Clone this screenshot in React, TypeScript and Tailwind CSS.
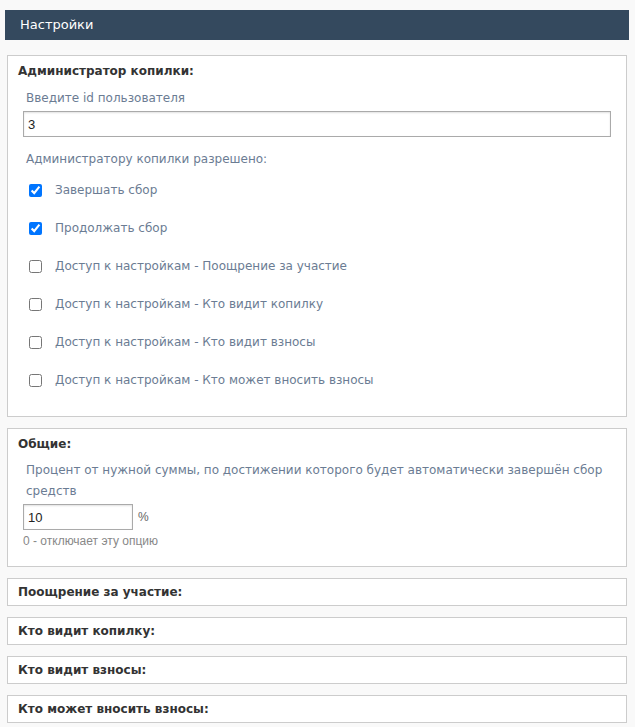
const permissions = [
  { label: "Завершать сбор", checked: true },
  { label: "Продолжать сбор", checked: true },
  { label: "Доступ к настройкам - Поощрение за участие", checked: false },
  { label: "Доступ к настройкам - Кто видит копилку", checked: false },
  { label: "Доступ к настройкам - Кто видит взносы", checked: false },
  { label: "Доступ к настройкам - Кто может вносить взносы", checked: false },
];

const collapsed = ["Поощрение за участие:", "Кто видит копилку:", "Кто видит взносы:", "Кто может вносить взносы:"];

const font = "font-['DejaVu_Sans',Verdana,sans-serif]";

function Title({ children }: { children: React.ReactNode }) {
  return <div className="text-[12px] leading-[18px] font-bold text-[#333]">{children}</div>;
}

export default function App() {
  return (
    <div className={`min-h-screen bg-[#f9f9f9] pt-[10px] pl-[5px] pr-[6px] ${font}`}>
      <div className="h-[30px] bg-[#34495e] text-white text-[13px] pl-[15px] flex items-center">Настройки</div>

      <div className="mx-[2px] mt-[15px] flex flex-col gap-[11px]">
        {/* admin */}
        <div className="border border-[#ccc] bg-white pt-[6px] pb-[17px] px-[10px]">
          <Title>Администратор копилки:</Title>
          <div className="mx-[5px] text-[12px] text-[#6b7c93]">
            <div className="mt-[9px] pl-[3px] leading-[18px]">Введите id пользователя</div>
            <input
              defaultValue="3"
              className="mt-[4px] block w-full h-[26px] border border-[#aaa] shadow-[inset_0_1px_2px_rgba(0,0,0,0.12)] px-[4px] text-[13px] text-[#222] font-['Liberation_Sans',Arial,sans-serif] outline-none"
            />
            <div className="mt-[13px] pl-[3px] leading-[18px]">Администратору копилки разрешено:</div>
            <div className="mt-[3px] flex flex-col">
              {permissions.map((p) => (
                <label key={p.label} className="h-[38px] flex items-center pl-[6px] gap-[13px]">
                  <input type="checkbox" defaultChecked={p.checked} className="m-0 w-[13px] h-[13px]" />
                  <span className="leading-[18px]">{p.label}</span>
                </label>
              ))}
            </div>
          </div>
        </div>

        {/* general */}
        <div className="border border-[#ccc] bg-white pt-[6px] pb-[18px] px-[10px]">
          <Title>Общие:</Title>
          <div className="mx-[5px] text-[12px] text-[#6b7c93]">
            <div className="mt-[7px] pl-[3px] leading-[21px]">
              Процент от нужной суммы, по достижении которого будет автоматически завершён сбор средств
            </div>
            <div className="mt-[2px] flex items-center gap-[5px]">
              <input
                defaultValue="10"
                className="block w-[110px] h-[26px] border border-[#aaa] shadow-[inset_0_1px_2px_rgba(0,0,0,0.12)] px-[4px] text-[13px] text-[#222] font-['Liberation_Sans',Arial,sans-serif] outline-none"
              />
              <span className="text-[12px] text-[#666] font-['Liberation_Sans',Arial,sans-serif]">%</span>
            </div>
            <div className="mt-[4px] text-[12px] leading-[14px] text-[#888] font-['Liberation_Sans',Arial,sans-serif]">
              0 - отключает эту опцию
            </div>
          </div>
        </div>

        {collapsed.map((t) => (
          <div key={t} className="border border-[#ccc] bg-white h-[28px] px-[10px] flex items-center">
            <Title>{t}</Title>
          </div>
        ))}
      </div>
    </div>
  );
}
